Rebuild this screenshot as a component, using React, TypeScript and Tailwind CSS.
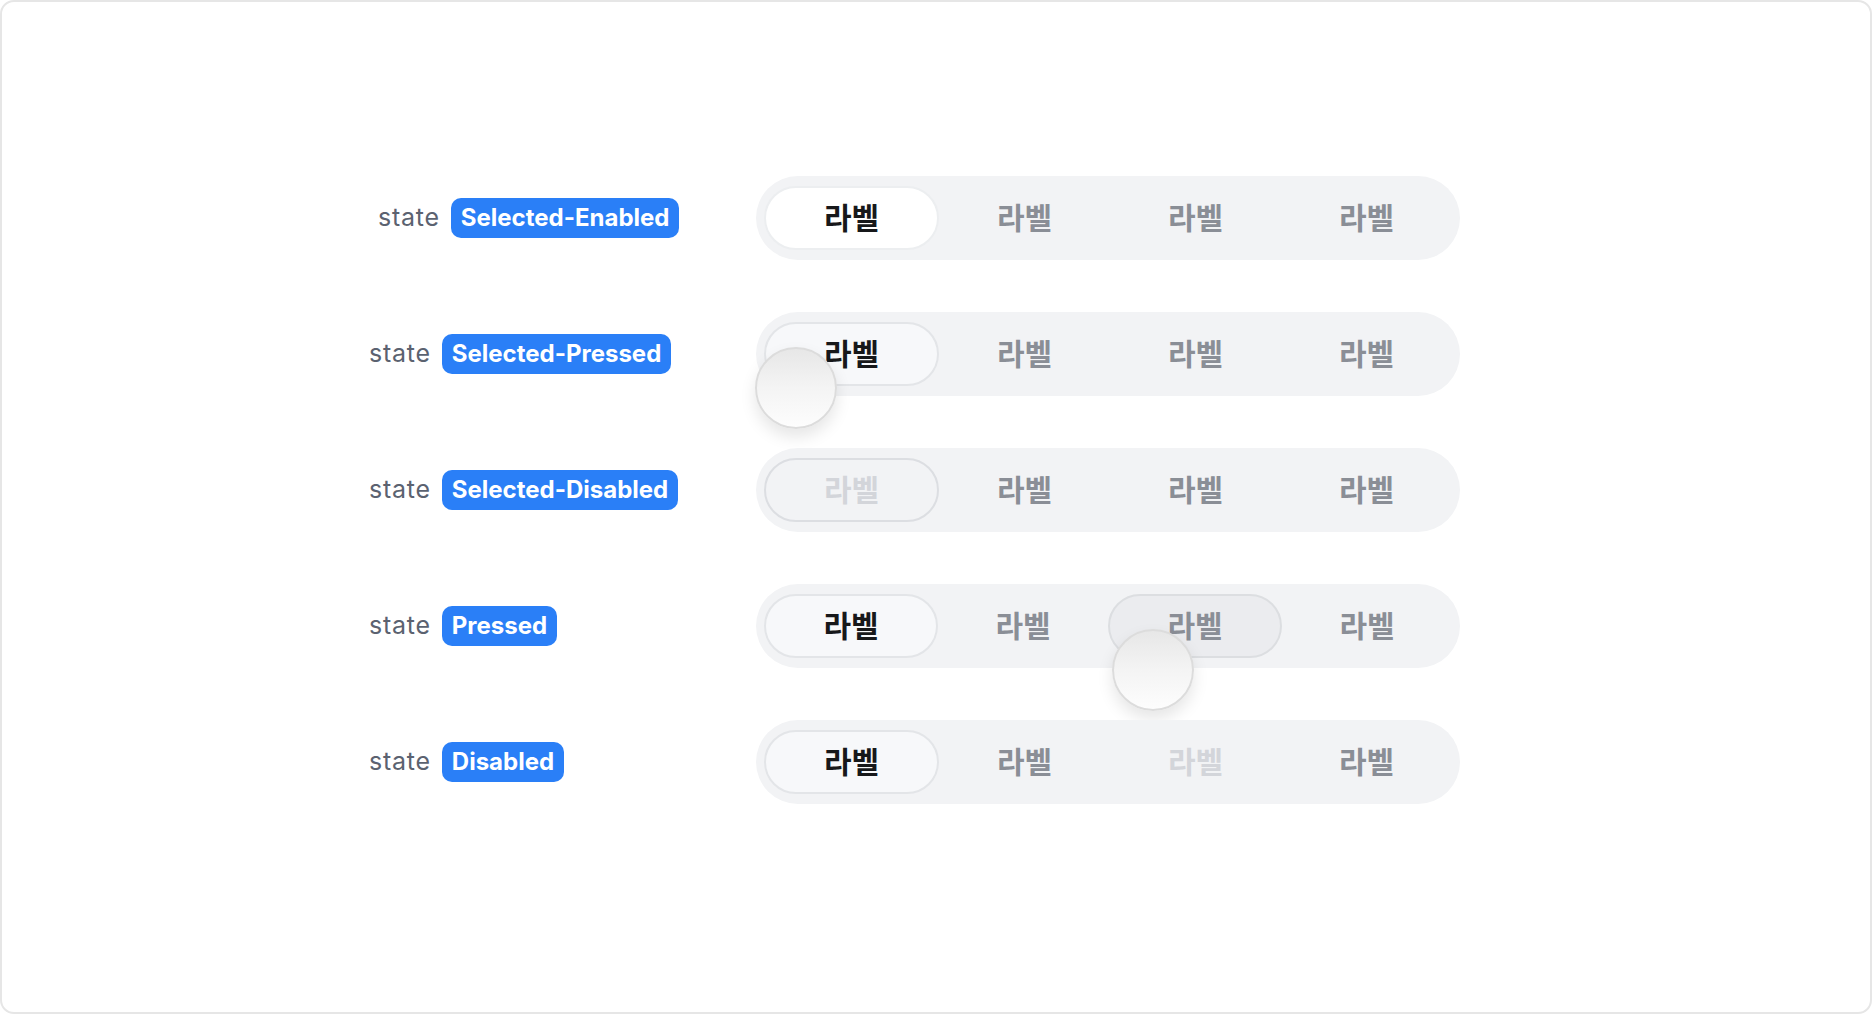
type SegState = "normal" | "selected" | "selectedWhite" | "selectedDisabled" | "pressed" | "disabled";

interface RowProps {
  badge: string;
  segments: SegState[];
  labelOffset?: string;
  touch?: string;
}

const segClass: Record<SegState, string> = {
  normal: "text-[#8a8e96]",
  selectedWhite: "bg-white border-2 border-[#eceef0] text-[#17181a]",
  selected: "bg-[#f7f8fa] border-2 border-[#e3e5e8] text-[#17181a]",
  selectedDisabled: "bg-[#f2f3f5] border-2 border-[#dcdee2] text-[#d3d5da]",
  pressed: "bg-[#ebecef] border-2 border-[#dcdee1] text-[#8a8e96]",
  disabled: "text-[#d3d5da]",
};

const Row = ({ badge, segments, labelOffset = "", touch }: RowProps) => {
  return (
    <div className="flex items-center">
      <div className={`w-[387px] flex items-center gap-[11px] ${labelOffset}`}>
        <span className="text-[25px] tracking-[0.03em] text-[#5b6270]">state</span>
        <span className="h-[40px] px-[10px] rounded-[10px] bg-[#2a7ff7] text-white text-[24px] font-bold flex items-center">
          {badge}
        </span>
      </div>
      <div className="relative w-[704px] h-[84px] rounded-full bg-[#f2f3f5] py-[10px] px-[8px] flex">
        {segments.map((s, i) => (
          <div
            key={i}
            className={`flex-1 h-[64px] rounded-full flex items-center justify-center text-[30px] font-bold ${segClass[s]}`}
          >
            라벨
          </div>
        ))}
        {touch && (
          <div
            className={`absolute w-[82px] h-[82px] rounded-full border-2 border-[#dcdcdc] bg-gradient-to-b from-[#e7e7e7] via-[#f4f4f4] to-[#fdfdfd] shadow-[0_8px_16px_rgba(0,0,0,0.10)] ${touch}`}
          />
        )}
      </div>
    </div>
  );
};

export default function App() {
  return (
    <div
      className="w-[1872px] h-[1014px] bg-white border-2 border-[#e6e6e6] rounded-[14px] pt-[174px] pl-[367px]"
      style={{ fontFamily: 'Inter, "Noto Sans CJK KR", sans-serif' }}
    >
      <div className="flex flex-col gap-[52px]">
        <Row
          badge="Selected-Enabled"
          labelOffset="pl-[9px]"
          segments={["selectedWhite", "normal", "normal", "normal"]}
        />
        <Row
          badge="Selected-Pressed"
          segments={["selected", "normal", "normal", "normal"]}
          touch="left-[-1px] top-[35px]"
        />
        <Row
          badge="Selected-Disabled"
          segments={["selectedDisabled", "normal", "normal", "normal"]}
        />
        <Row
          badge="Pressed"
          segments={["selected", "normal", "pressed", "normal"]}
          touch="left-[356px] top-[45px]"
        />
        <Row
          badge="Disabled"
          segments={["selected", "normal", "disabled", "normal"]}
        />
      </div>
    </div>
  );
}
